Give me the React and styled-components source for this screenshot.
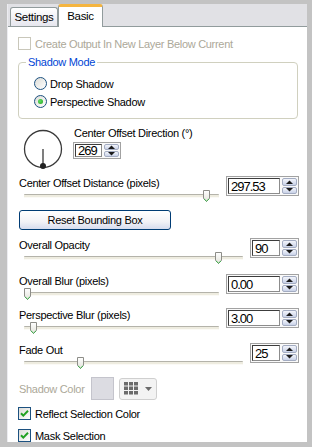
import styled, { createGlobalStyle } from "styled-components"

const GlobalStyle = createGlobalStyle`
  html, body {
    margin: 0;
    padding: 0;
    background: #c3c3c3;
  }
  body {
    font-family: "Liberation Sans", Arial, sans-serif;
    font-size: 11px;
    letter-spacing: -0.3px;
    color: #000;
  }
`

const Frame = styled.div`
  width: 312px;
  height: 447px;
  box-sizing: border-box;
  padding: 4px 5px 5px 7px;
  background: #c3c3c3;
  display: flex;
`

const Window = styled.div`
  flex: 1;
  display: flex;
  flex-direction: column;
  background: #e1e1e5;
  border-left: 1px solid #ececf0;
`

const TabStrip = styled.div`
  height: 22px;
  display: flex;
  align-items: flex-end;
  padding-left: 2px;
`

const Tab = styled.div`
  position: relative;
  box-sizing: border-box;
  width: ${p => (p.$active ? 45 : 48)}px;
  height: ${p => (p.$active ? 23 : 19)}px;
  margin-bottom: ${p => (p.$active ? -1 : 0)}px;
  z-index: ${p => (p.$active ? 1 : 0)};
  border: 1px solid #919b9c;
  border-bottom: none;
  border-top: ${p => (p.$active ? "3px solid #f5b53f" : "1px solid #919b9c")};
  border-radius: 3px 3px 0 0;
  background: ${p => (p.$active ? "#fff" : "linear-gradient(#ffffff, #e6e6ee)")};
  display: flex;
  align-items: center;
  justify-content: center;
  padding-bottom: ${p => (p.$active ? 3 : 0)}px;
  font-size: 11.5px;
`

const Panel = styled.div`
  flex: 1;
  background: #fff;
  border-top: 1px solid #919b9c;
  padding: 10px 8px 0 10px;
  display: flex;
  flex-direction: column;
`

const CheckRow = styled.div`
  display: flex;
  align-items: center;
  gap: 4px;
  height: 13px;
  margin-top: ${p => p.$mt || 0}px;
  color: ${p => (p.$disabled ? "#aca899" : "#000")};
`

const Box = styled.div`
  box-sizing: border-box;
  width: 13px;
  height: 13px;
  border: 1px solid ${p => (p.$disabled ? "#c9c7ba" : "#1c5180")};
  background: ${p => (p.$disabled ? "#fff" : "linear-gradient(135deg, #dcdcd7, #ffffff)")};
  display: flex;
  align-items: center;
  justify-content: center;
`

const Group = styled.fieldset`
  margin: 6px 1px 0 0;
  padding: 8px 0 10px 15px;
  border: 1px solid #d0d0bf;
  border-radius: 4px;
  min-inline-size: 0;
  display: flex;
  flex-direction: column;
  gap: 5px;
`

const Legend = styled.legend`
  margin-left: -8px;
  padding: 0 2px;
  color: #0046d5;
  line-height: 13px;
`

const RadioRow = styled.div`
  display: flex;
  align-items: center;
  gap: 3px;
  height: 13px;
`

const RadioCircle = styled.div`
  box-sizing: border-box;
  width: 13px;
  height: 13px;
  border-radius: 50%;
  border: 1px solid #1c5180;
  background: linear-gradient(135deg, #dcdcd7, #ffffff);
  display: flex;
  align-items: center;
  justify-content: center;
`

const RadioDot = styled.div`
  width: 5px;
  height: 5px;
  border-radius: 50%;
  background: radial-gradient(circle at 40% 40%, #5fe05f, #21a121);
`

const DialRow = styled.div`
  display: flex;
  margin-top: 8px;
`

const Dial = styled.svg`
  margin: 2px 0 0 5px;
  flex-shrink: 0;
`

const DialInfo = styled.div`
  margin-left: 10px;
  display: flex;
  flex-direction: column;
  gap: 2px;
`

const Label = styled.div`
  height: ${p => p.$h || 14}px;
  line-height: ${p => p.$h || 14}px;
  white-space: nowrap;
  padding-left: 1px;
  color: ${p => (p.$disabled ? "#aca899" : "#000")};
`

const SliderRow = styled.div`
  display: flex;
  align-items: flex-start;
  margin-top: ${p => p.$mt}px;
`

const SliderCol = styled.div`
  flex: 1;
  display: flex;
  flex-direction: column;
`

const Track = styled.div`
  position: relative;
  height: 13px;
  margin: 0 7px 0 6px;
  &::before {
    content: "";
    position: absolute;
    left: 0;
    right: 0;
    top: 4px;
    height: 2px;
    border-top: 1px solid #b4b3aa;
    border-bottom: 1px solid #fbfaf6;
    background: #eeece0;
    border-radius: 1px;
  }
`

const Thumb = styled.svg`
  position: absolute;
  top: 0;
`

const Spin = styled.div`
  box-sizing: border-box;
  width: ${p => p.$w}px;
  height: ${p => p.$h || 20}px;
  border: 1px solid #a2a2a2;
  padding: 1px;
  display: flex;
  gap: 2px;
  background: #fafafa;
`

const SpinField = styled.div`
  flex: 1;
  box-sizing: border-box;
  border: 1px solid;
  border-color: #3c3c3c #8c8c8c #8c8c8c #3c3c3c;
  background: #fff;
  font-size: 13px;
  letter-spacing: -1px;
  display: flex;
  align-items: center;
  padding-left: 2px;
`

const SpinButtons = styled.div`
  width: 15px;
  display: flex;
  flex-direction: column;
  gap: 1px;
`

const SpinButton = styled.div`
  flex: 1;
  box-sizing: border-box;
  border: 1px solid #a3acc2;
  border-radius: 2px;
  background: linear-gradient(#f3f5fb, #c9d2e8);
  display: flex;
  align-items: center;
  justify-content: center;
`

const ResetButton = styled.div`
  box-sizing: border-box;
  width: 152px;
  height: 20px;
  margin: 7px 0 0 1px;
  border: 1px solid #003c74;
  border-radius: 3px;
  background: linear-gradient(#ffffff, #f2f2f6 60%, #d6dcee);
  display: flex;
  align-items: center;
  justify-content: center;
`

const ColorRow = styled.div`
  display: flex;
  align-items: center;
  margin-top: 7px;
  height: 23px;
`

const ColorLabel = styled(Label)`
  width: 72px;
`

const Swatch = styled.div`
  box-sizing: border-box;
  width: 23px;
  height: 23px;
  border: 1px solid #c4c4cc;
  background: #dcdce2;
`

const PickerButton = styled.div`
  box-sizing: border-box;
  width: 38px;
  height: 22px;
  margin-left: 5px;
  border: 1px solid #cfcfcf;
  border-radius: 3px;
  background: #f3f3f3;
  display: flex;
  align-items: center;
  padding: 0 4px;
  justify-content: space-between;
`

function Check({ checked, disabled }) {
  return (
    <Box $disabled={disabled}>
      {checked && (
        <svg width="9" height="9" viewBox="0 0 9 9">
          <path d="M1 4.2L3.3 6.6L8 1.8" fill="none" stroke="#21a121" strokeWidth="2" />
        </svg>
      )}
    </Box>
  )
}

function Radio({ label, selected }) {
  return (
    <RadioRow>
      <RadioCircle>{selected && <RadioDot />}</RadioCircle>
      <span>{label}</span>
    </RadioRow>
  )
}

function Arrow({ up }) {
  return (
    <svg width="7" height="4" viewBox="0 0 7 4">
      <path d={up ? "M0 4L3.5 0.5L7 4Z" : "M0 0L3.5 3.5L7 0Z"} fill="#1a1a1a" />
    </svg>
  )
}

function SpinBox({ value, width, height }) {
  return (
    <Spin $w={width} $h={height}>
      <SpinField>{value}</SpinField>
      <SpinButtons>
        <SpinButton><Arrow up /></SpinButton>
        <SpinButton><Arrow /></SpinButton>
      </SpinButtons>
    </Spin>
  )
}

function Slider({ label, value, pos, wide, mt }) {
  return (
    <SliderRow $mt={mt}>
      <SliderCol>
        <Label>{label}</Label>
        <Track>
          <Thumb width="7" height="12" viewBox="0 0 7 12" style={{ left: `calc(${pos * 100}% - ${pos * 7}px)` }}>
            <defs>
              <linearGradient id="thumbFill" x1="0" x2="0" y1="0" y2="1">
                <stop offset="0" stopColor="#ffffff" />
                <stop offset="1" stopColor="#e2e2da" />
              </linearGradient>
            </defs>
            <path d="M0.5 0.5H6.5V8.5L3.5 11.5L0.5 8.5Z" fill="url(#thumbFill)" stroke="#8d8d88" />
            <path d="M1 8.8L3.5 11.2L6 8.8" fill="none" stroke="#3cb24a" strokeWidth="1" />
          </Thumb>
        </Track>
      </SliderCol>
      <SpinBox value={value} width={wide ? 73 : 49} />
    </SliderRow>
  )
}

function App() {
  return (
    <>
      <GlobalStyle />
      <Frame>
        <Window>
          <TabStrip>
            <Tab>Settings</Tab>
            <Tab $active>Basic</Tab>
          </TabStrip>
          <Panel>
            <CheckRow $disabled>
              <Check disabled />
              <span>Create Output In New Layer Below Current</span>
            </CheckRow>

            <Group>
              <Legend>Shadow Mode</Legend>
              <Radio label="Drop Shadow" />
              <Radio label="Perspective Shadow" selected />
            </Group>

            <DialRow>
              <Dial width="40" height="40" viewBox="0 0 40 40">
                <circle cx="20" cy="20" r="18.5" fill="none" stroke="#3a3a3a" strokeWidth="1.3" />
                <line x1="20" y1="20" x2="20" y2="36" stroke="#3a3a3a" strokeWidth="1.3" />
                <circle cx="20" cy="37" r="3" fill="#222" />
              </Dial>
              <DialInfo>
                <Label $h={13}>Center Offset Direction (°)</Label>
                <SpinBox value="269" width={48} height={17} />
              </DialInfo>
            </DialRow>

            <Slider label="Center Offset Distance (pixels)" value="297.53" pos={0.95} wide mt={7} />

            <ResetButton>Reset Bounding Box</ResetButton>

            <Slider label="Overall Opacity" value="90" pos={0.9} mt={8} />
            <Slider label="Overall Blur (pixels)" value="0.00" pos={0} wide mt={9} />
            <Slider label="Perspective Blur (pixels)" value="3.00" pos={0.03} wide mt={7} />
            <Slider label="Fade Out" value="25" pos={0.25} mt={8} />

            <ColorRow>
              <ColorLabel $disabled>Shadow Color</ColorLabel>
              <Swatch />
              <PickerButton>
                <svg width="14" height="13" viewBox="0 0 14 13">
                  {[0, 1, 2].map(r =>
                    [0, 1, 2].map(c => (
                      <rect key={`${r}${c}`} x={c * 5} y={r * 4.5} width="4" height="3.5" fill="#6b6b6b" />
                    ))
                  )}
                </svg>
                <svg width="7" height="4" viewBox="0 0 7 4">
                  <path d="M0 0H7L3.5 4Z" fill="#6b6b6b" />
                </svg>
              </PickerButton>
            </ColorRow>

            <CheckRow $mt={7}>
              <Check checked />
              <span>Reflect Selection Color</span>
            </CheckRow>
            <CheckRow $mt={9}>
              <Check checked />
              <span>Mask Selection</span>
            </CheckRow>
          </Panel>
        </Window>
      </Frame>
    </>
  )
}

export default App
